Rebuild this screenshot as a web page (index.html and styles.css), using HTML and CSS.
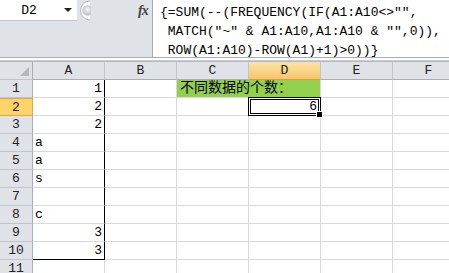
FILE: index.html
```html
<!doctype html>
<html>
 <head>
	<meta charset="UTF-8">
	<title>不同数据的个数</title>
	<link rel="stylesheet" href="styles.css">
 </head>
 <body>
	<div class="fbar">
		<div class="fleft">
			<div class="ftop">
				<div class="namebox">
					<span class="name">D2</span>
					<span class="drop"></span>
				</div>
				<svg class="knob" width="14" height="21" viewBox="0 0 14 21">
					<defs>
						<radialGradient id="kg" cx="50%" cy="40%" r="60%">
							<stop offset="0" stop-color="#f4f5f7"/>
							<stop offset="1" stop-color="#b9bdc3"/>
						</radialGradient>
					</defs>
					<path d="M13 1 A9.5 9.5 0 0 0 13 20" fill="#fff" stroke="#b4b8be"/>
					<circle cx="10.5" cy="10.5" r="5" fill="url(#kg)" stroke="#c6c9ce" stroke-width="0.6"/>
				</svg>
				<span class="fx">fx</span>
			</div>
		</div>
		<div class="formula">{=SUM(--(FREQUENCY(IF(A1:A10&lt;&gt;"",
 MATCH("~" &amp; A1:A10,A1:A10 &amp; "",0)),
 ROW(A1:A10)-ROW(A1)+1)&gt;0))}</div>
	</div>
	<div class="split"></div>

	<div class="sheet">
		<div class="corner"><span class="tri"></span></div>
		<div class="ch">A</div>
		<div class="ch">B</div>
		<div class="ch">C</div>
		<div class="ch ch_sel">D</div>
		<div class="ch">E</div>
		<div class="ch">F</div>

		<div class="rh">1</div>
		<div class="c a num">1</div>
		<div class="c"></div>
		<div class="c green">不同数据的个数：</div>
		<div class="c"></div>
		<div class="c"></div>

		<div class="rh rh_sel">2</div>
		<div class="c a num">2</div>
		<div class="c"></div>
		<div class="c"></div>
		<div class="c num sel">6<span class="handle"></span></div>
		<div class="c"></div>
		<div class="c"></div>

		<div class="rh">3</div>
		<div class="c a num">2</div>
		<div class="c"></div><div class="c"></div><div class="c"></div><div class="c"></div><div class="c"></div>

		<div class="rh">4</div>
		<div class="c a">a</div>
		<div class="c"></div><div class="c"></div><div class="c"></div><div class="c"></div><div class="c"></div>

		<div class="rh">5</div>
		<div class="c a">a</div>
		<div class="c"></div><div class="c"></div><div class="c"></div><div class="c"></div><div class="c"></div>

		<div class="rh">6</div>
		<div class="c a">s</div>
		<div class="c"></div><div class="c"></div><div class="c"></div><div class="c"></div><div class="c"></div>

		<div class="rh">7</div>
		<div class="c a"></div>
		<div class="c"></div><div class="c"></div><div class="c"></div><div class="c"></div><div class="c"></div>

		<div class="rh">8</div>
		<div class="c a">c</div>
		<div class="c"></div><div class="c"></div><div class="c"></div><div class="c"></div><div class="c"></div>

		<div class="rh">9</div>
		<div class="c a num">3</div>
		<div class="c"></div><div class="c"></div><div class="c"></div><div class="c"></div><div class="c"></div>

		<div class="rh">10</div>
		<div class="c a a_last num">3</div>
		<div class="c"></div><div class="c"></div><div class="c"></div><div class="c"></div><div class="c"></div>

		<div class="rh">11</div>
		<div class="c"></div>
		<div class="c"></div><div class="c"></div><div class="c"></div><div class="c"></div><div class="c"></div>
	</div>
 </body>
</html>
```

FILE: styles.css
```css
body{
	margin:0;
	width:449px;
	height:273px;
	overflow:hidden;
	background:#fff;
	font-family:"Liberation Mono","Noto Sans CJK SC",monospace;
	font-size:13px;
	color:#000;
}

/* 编辑栏 */
.fbar{
	display:flex;
	height:57px;
	background:#dfe3e8;
	border-bottom:1px solid #a7acb3;
}
.fleft{width:152px}
.ftop{
	display:flex;
	align-items:center;
	height:21px;
}
.namebox{
	width:77px;
	height:21px;
	box-sizing:border-box;
	background:#fff;
	border-bottom:1px solid #c3c7cd;
	display:flex;
	align-items:center;
}
.name{
	width:58px;
	text-align:center;
}
.drop{
	width:0;height:0;
	border-left:4px solid transparent;
	border-right:4px solid transparent;
	border-top:4px solid #222;
	margin-left:6px;
}
.fx{
	margin-left:47px;
	font-family:"Liberation Serif",serif;
	font-style:italic;
	font-weight:bold;
	font-size:14px;
	color:#444;
	letter-spacing:-1px;
}
.formula{
	flex:1;
	background:#fff;
	border-left:1px solid #a7acb3;
	padding:3px 0 0 7px;
	line-height:19px;
	white-space:pre;
	overflow:hidden;
}
.split{
	height:2px;
	background:#fff;
	border-bottom:1px solid #c9cdd2;
}

/* 工作表 */
.sheet{
	display:grid;
	grid-template-columns:33px repeat(6,72px);
	grid-auto-rows:18px;
	border-top:1px solid #b5bac1;
}
.sheet > div{
	box-sizing:border-box;
	line-height:17px;
	white-space:nowrap;
}
.corner,.ch,.rh{
	background:#dfe3e8;
	color:#222;
	text-align:center;
	border-right:1px solid #c1c5cb;
	border-bottom:1px solid #c1c5cb;
}
.corner{position:relative;border-right-color:#a9aeb5}
.tri{
	position:absolute;
	right:3px;bottom:3px;
	width:0;height:0;
	border-left:9px solid transparent;
	border-bottom:9px solid #b3b8bf;
}
.rh{border-right-color:#a9aeb5}
.ch{border-bottom-color:#a9aeb5}
.ch_sel{
	background:linear-gradient(#fbe3a6,#f6c86a);
	border-bottom:1px solid #f29436;
}
.rh_sel{
	background:#fcd56a;
	border:1px solid #f0a33b;
	border-left:0;
}
.c{
	border-right:1px solid #d9d9d9;
	border-bottom:1px solid #d9d9d9;
	padding:0 2px;
}
.num{text-align:right}
.a{border-right:1px solid #000}
.a_last{border-bottom:1px solid #000}
.green{
	grid-column:span 2;
	background:#92d050;
	font-size:14px;
	padding-left:3px;
	border-bottom-color:#d9d9d9;
}
.sel{
	position:relative;
	padding-right:3px;
}
.sel::after{
	content:"";
	position:absolute;
	left:-1px;top:-1px;right:-1px;bottom:-1px;
	border:1px solid #000;
	box-shadow:inset 0 0 0 1px #fff,inset 0 0 0 2px #000;
}
.handle{
	position:absolute;
	right:-3px;bottom:-3px;
	width:5px;height:5px;
	background:#000;
	border:1px solid #fff;
	z-index:1;
}
```
